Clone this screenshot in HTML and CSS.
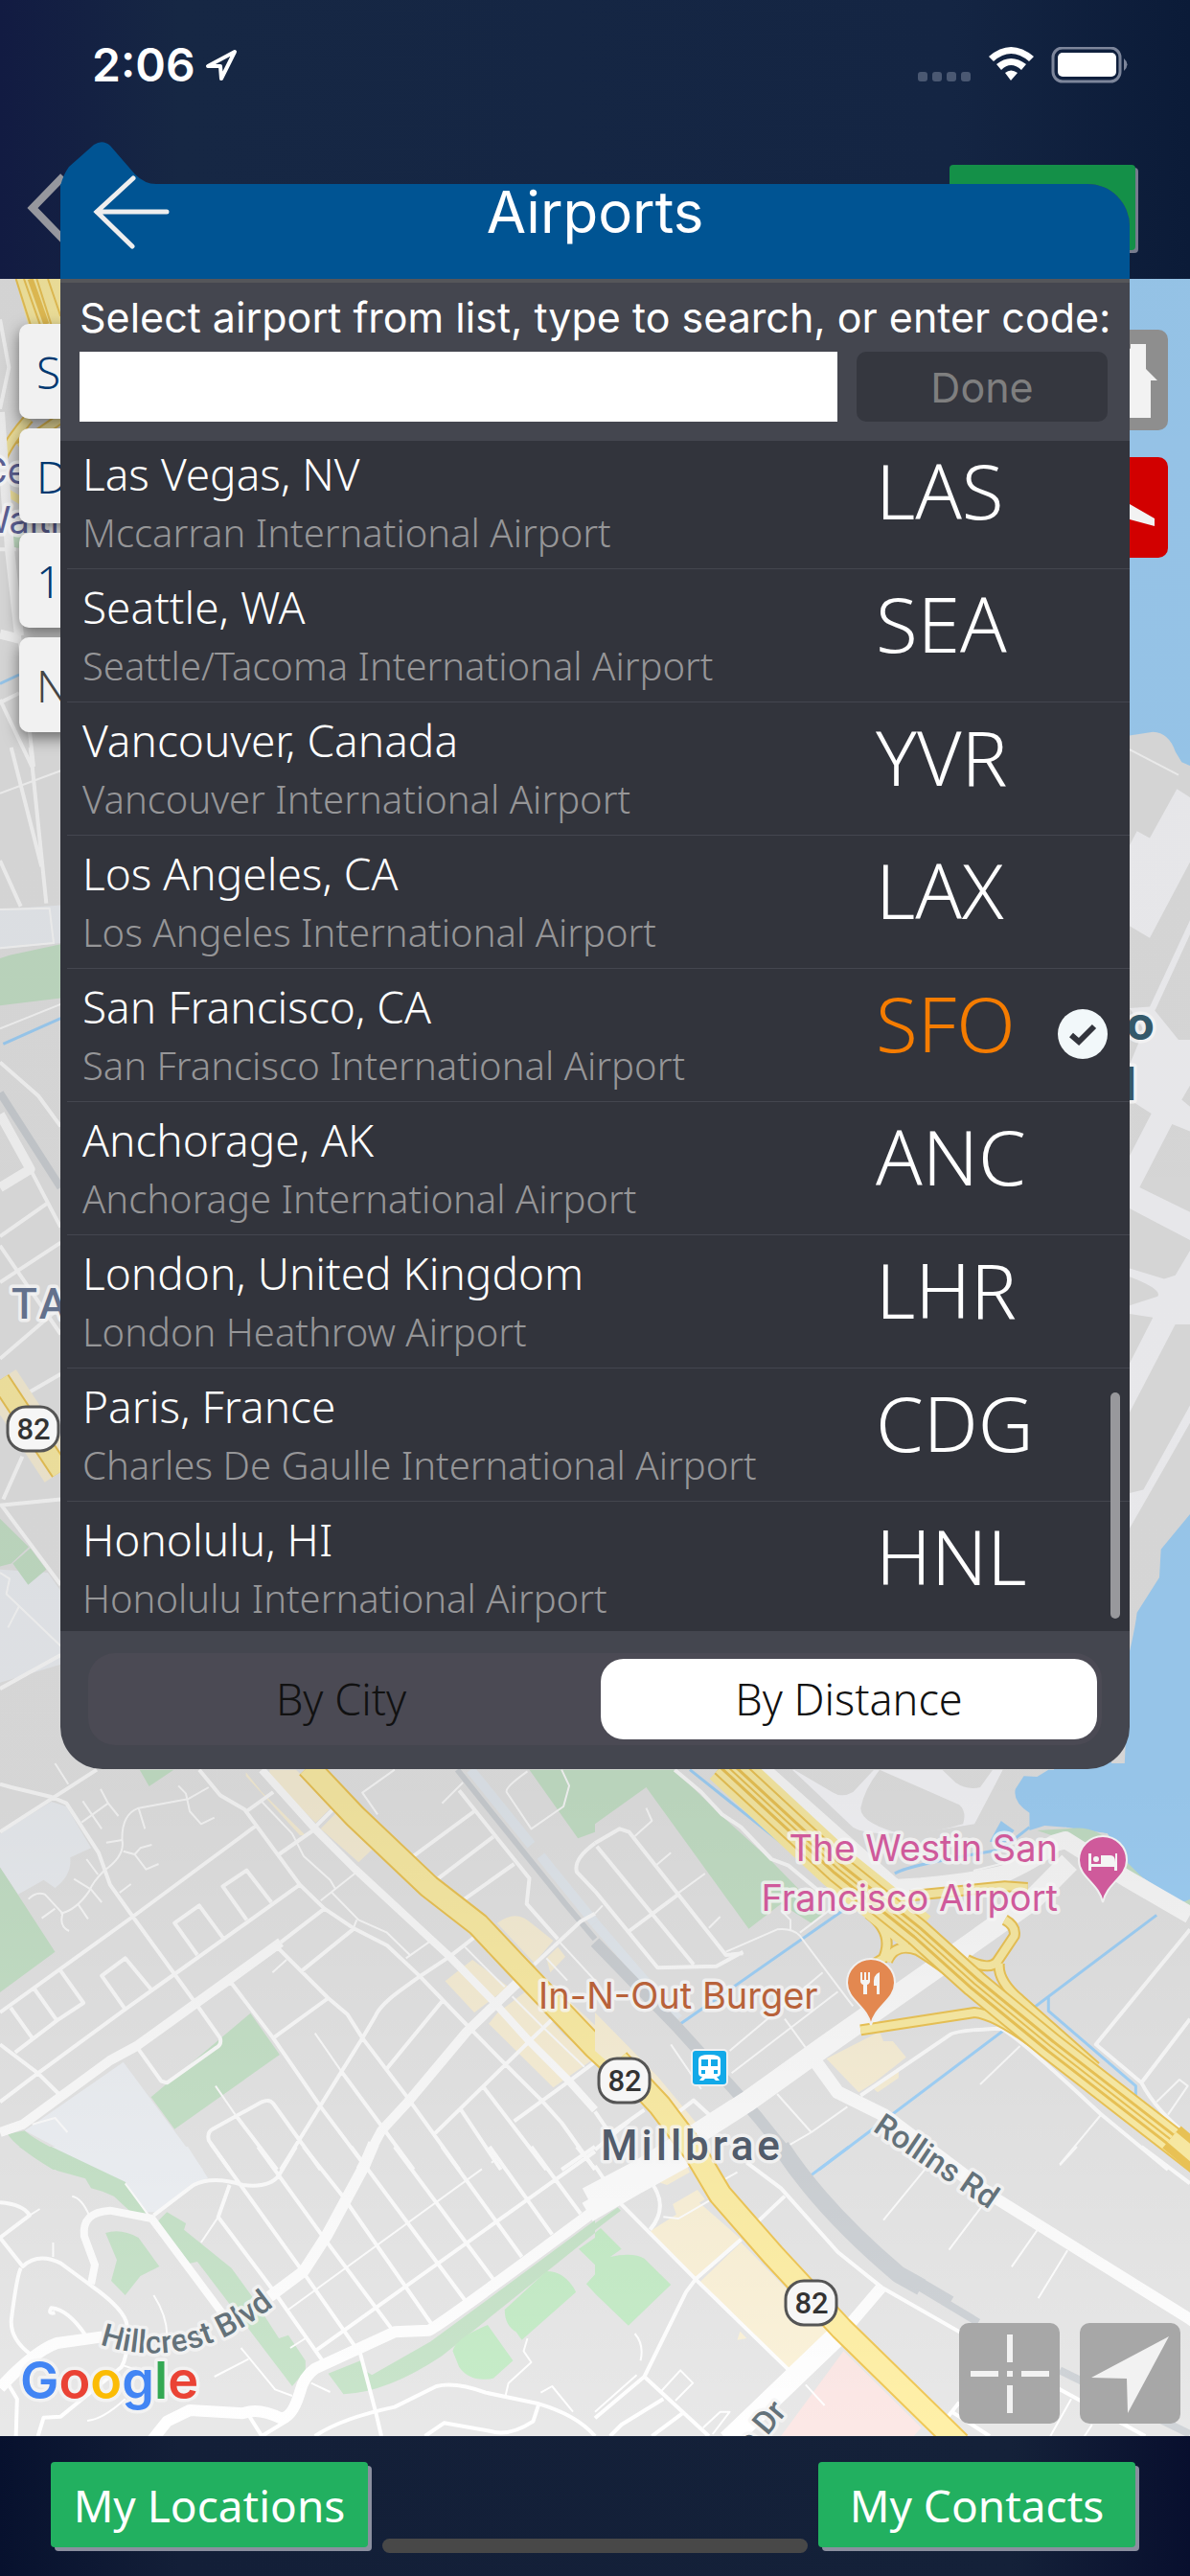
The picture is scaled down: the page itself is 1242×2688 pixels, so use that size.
FILE: index.html
```html
<!DOCTYPE html>
<html lang="en">
<head>
  <meta charset="UTF-8" />
  <meta name="viewport" content="width=device-width, initial-scale=1" />
  <title>Airports</title>
  <link rel="stylesheet" href="styles.css">
</head>
<body>
  <header class="top-bar">
    <div class="status">
      <span class="time">2:06</span>
      <svg class="loc" width="34" height="34" viewBox="0 0 34 34"><path d="M31 3 L3 18 L16 18 L17 31 Z" /></svg>
      <svg class="signal" width="221" height="38" viewBox="0 0 221 38">
        <g fill="#4a5872">
          <rect x="1" y="26" width="10" height="10" rx="3" /><rect x="16" y="26" width="10" height="10" rx="3" />
          <rect x="31" y="26" width="10" height="10" rx="3" /><rect x="46" y="26" width="10" height="10" rx="3" />
        </g>
        <g fill="#fff">
          <path d="M75 10 Q98 -10 122 10 L117 15 Q98 -1 80 15Z" />
          <path d="M83 18 Q98 6 114 18 L109 24 Q98 14 88 24Z" />
          <path d="M92 27 Q98 22 105 27 L98 35Z" />
          <rect x="147" y="6" width="61" height="25" rx="5" />
        </g>
        <rect x="142" y="1" width="70" height="35" rx="10" fill="none" stroke="#7d869b" stroke-width="3" />
        <path d="M216 12 Q223 18 216 25Z" fill="#7d869b" />
      </svg>
    </div>
    <div class="nav">
      <button class="nav-back" aria-label="Back">
        <svg width="44" height="72" viewBox="0 0 44 72"><path d="M38 3 L6 36 L38 69" /></svg>
      </button>
      <span class="nav-title">Pick Airport</span>
      <button class="green dim" aria-label="Next"></button>
    </div>
  </header>

  <main class="map">
    <svg class="map-art" viewBox="0 291 1242 2251" preserveAspectRatio="xMidYMid slice">
      <defs>
        <linearGradient id="shade" x1="0" y1="0" x2="0" y2="1">
          <stop offset="0" stop-opacity=".09" />
          <stop offset=".7" stop-opacity=".08" />
          <stop offset="1" stop-opacity="0" />
        </linearGradient>
        <path id="hillcrest" d="M104 2446 Q205 2480 300 2394" />
      </defs>
      <rect class="land" x="0" y="291" width="1242" height="2251" />

      <!-- west edge, top -->
      <g transform="translate(0 280) scale(.33333)">
        <path class="hwy-fill" d="M48 33 H190 V175 H88Z" />
        <path class="gold w2" d="M50 33 L95 175 M75 33 L125 175 M115 33 L160 175 M150 33 L190 150" />
        <path class="gold w6" d="M95 33 L145 175" />
        <path class="gold w12" d="M8 590 Q30 540 90 470 M60 560 L190 470" />
        <path class="hwy w8" d="M8 590 Q30 540 90 470 M60 560 L190 470 M20 700 L70 730" />
        <path class="park" d="M40 810 H120 V875 H40Z" />
        <path class="road w5" d="M0 160 L28 310 L0 440 M0 880 H50 M0 1360 L60 1330 M0 1350 L100 1560 M60 1150 L105 1560" />
        <path class="road w10" d="M0 450 L30 880 L60 1150 M0 1145 L60 1160" />
        <path class="creek" d="M0 1300 L60 1272" />
      </g>

      <!-- west edge, San Bruno side -->
      <g transform="translate(0 780) scale(.33333 .63776)">
        <path class="campus" d="M0 265 L190 258 V320 L0 330Z M0 1345 L150 1350 L190 1380 V1500 L0 1530Z" />
        <path class="park" d="M0 345 L30 340 L190 322 V410 L0 422Z M0 1262 L90 1308 L35 1335 L0 1340Z M40 1335 L95 1310 L145 1345 L88 1370Z" />
        <path class="rail w8" d="M0 565 L190 720" />
        <path class="road w2" d="M0 75 L190 38 M0 265 L155 263 L168 320 L0 328 M0 460 L190 420 M0 1350 L30 1360 L20 1385 L60 1405 L25 1440 M60 1405 L190 1470" />
        <path class="road w5" d="M95 0 L145 255 M35 0 L130 195 M0 185 L65 260 M0 515 L120 570 L190 620 M95 690 L190 785 M0 800 L150 745 M0 875 L190 810 M0 815 L190 960 M0 1000 L190 915 M75 1060 L190 1025 M0 1240 L190 1230 M5 1240 L190 1370 M70 1160 L10 1230 M0 1540 L190 1485" />
        <path class="road w10" d="M0 600 L95 690 L0 720" />
        <path class="creek" d="M10 485 L190 443" />
        <path class="shops-line" d="M0 1035 L190 1185" />
        <path class="gold w22" d="M0 1035 L190 1185" />
        <path class="hwy w18" d="M0 1035 L190 1185" />
      </g>

      <!-- bay and runways -->
      <rect class="water" x="1100" y="291" width="142" height="1600" />
      <g transform="translate(1060 700) scale(.33333 .73342)">
        <path class="land" d="M300 92 H357 L430 87 Q480 88 500 115 L520 130 L546 135 V1200 L455 1250 L450 1290 L380 1340 Q375 1360 357 1395 L340 1568 H300Z" />
        <path class="runway" d="M357 248 L380 228 L420 238 L505 168 L546 180 V272 L420 380 L357 363Z M357 560 L430 480 L510 525 L546 525 V590 L520 610 L546 620 V655 L490 645 L388 735 L546 770 V810 L357 765 V690 L425 630 L357 610Z M357 850 L465 865 L500 860 L546 825 V930 L500 930 L357 1055 V985 L430 920 L357 915 V903 L445 890 Q460 880 357 862Z M357 1170 L400 1165 L546 1045 V1070 L357 1220Z M357 480 L420 478 L546 355 V375 L440 480 L400 510Z" />
        <path class="road w2" d="M357 112 L510 148" />
      </g>

      <!-- hills, west of El Camino -->
      <g transform="translate(0 1840) scale(.39605 .33333)">
        <path class="park" d="M0 325 L145 590 L0 717Z M368 20 H458 L393 72Z M1395 20 H1568 V215 L1523 235Z M398 1045 L660 782 L700 850 L737 912 L460 1145Z M20 1160 L65 1150 Q100 1190 260 1272 H140 Q40 1200 20 1160Z" />
        <path class="campus" d="M0 220 L135 120 L175 135 L240 265 L185 295 Q190 350 145 390 L115 365 L48 410 L0 325Z M325 935 L535 1272 H260 L65 1150Z" />
        <path class="shops" d="M648 28 L690 90 L805 225 L790 225 L648 40Z M710 20 H780 L880 130 L832 187 L710 40Z M845 205 L890 150 L985 265 L945 310Z M1310 500 Q1360 455 1400 500 L1458 555 L1408 625Z M1173 682 L1245 615 L1340 700 L1250 780Z M1288 815 L1310 782 L1385 715 L1485 850 L1565 925 L1458 1015Z M1440 610 L1470 575 L1490 605 L1450 655Z M1460 700 L1568 820 V870Z" />
        <path class="rail-lite" d="M1240 20 L1400 255 M1425 290 L1568 500" />
        <path class="rail w6" d="M1205 20 L1320 190 L1490 440 L1568 550" />
        <path class="road w2" d="M145 0 L180 65 M550 75 L495 112 L365 140 Q320 160 322 240 Q330 290 275 335 Q245 370 235 400 Q200 460 160 470 M470 70 L490 95 L500 150 L530 190 L565 170 M265 80 L285 125 L312 165 M285 125 L215 185 M218 118 L268 205 M365 140 L382 205 M322 240 L280 248 M325 275 L355 285 L370 265 L400 255 M355 285 L385 332 L418 315 M228 300 L258 348 M195 362 L240 395 L268 435 M75 425 Q95 400 118 410 L165 470 Q155 510 182 525 M110 485 L145 455 M205 440 L232 487 M345 378 L315 405 M690 120 L770 220 L800 290 L870 365 L885 395 M935 345 L845 430 M875 405 L945 490 L1020 530 L1080 600 M1130 560 L1070 610 M940 490 L930 520 M755 615 L718 655 M830 845 L900 965 M568 1010 L620 1100 M1040 20 L955 92 L995 160 M1220 60 L1165 125 M1225 575 L1330 700 M1390 25 Q1330 75 1335 90 L1400 205 L1485 135 L1500 70 L1480 20 M1350 730 L1430 825 L1540 950 M85 1130 L145 1110 L178 1155 M1475 560 L1568 680 M1440 610 L1495 680" />
        <path class="road w5" d="M0 65 L30 75 L135 105 L175 125 L260 280 L290 380 L350 480 L460 660 L515 750 L580 860 Q585 880 570 890 L440 1000 L425 995 L365 895 M255 20 L0 215 M525 20 L580 100 L645 145 L790 380 L855 455 L930 515 L1020 570 L1105 665 L1235 825 L1330 940 L1427 1055 L1480 1125 L1568 1272 M720 90 L650 150 M675 195 L350 480 L0 780 M825 210 L735 285 M790 380 L460 660 L330 770 L100 970 L0 1060 M855 455 L740 560 M0 880 L100 970 L155 1035 M160 650 L220 750 L150 805 L40 905 M90 705 L150 805 M28 765 L85 860 M330 770 L268 665 L330 610 L400 710 M520 600 L460 500 L525 445 L590 550 M650 490 L587 385 L650 335 L715 435 M930 520 L795 650 M730 575 L865 735 L915 785 L955 860 L1070 1040 L1210 1272 M608 685 L720 860 L845 1075 L955 1250 M515 760 L608 685 L735 575 M865 735 L720 860 M1255 540 L1185 605 L1105 668 L1050 715 Q1000 760 990 790 L955 860 L900 965 L740 1272 M1165 745 L1020 955 M900 965 L1090 1272 M605 1272 L550 1180 Q545 1155 560 1145 L690 1060 Q710 1050 720 1065 L845 1272 M620 1100 L730 1272 M1500 995 L1355 1120 M1465 790 L1395 870 L1145 1160 M1275 1015 L1440 1272 M1215 1085 L1320 1272 M1568 935 L1500 995 M1568 1200 L1480 1272 M1090 290 L1250 150 M1150 365 L1300 230 M1218 430 L1355 315 M1210 85 L1395 360 L1388 440 L1470 550 M1568 250 Q1510 300 1520 340 L1568 400 M830 200 L885 135" />
        <path class="road w8" d="M690 20 L830 205 L935 330 L1185 605 L1300 745 L1395 870 L1500 995 L1568 1085" />
        <path class="road w10" d="M1370 680 L1230 840 L1075 1060 L1005 1150 L950 1272 M740 560 L360 885 L290 930 L60 1130 L0 1155" />
        <path class="gold w26" d="M812 10 L935 165 L1130 385 L1260 505 L1355 625 L1568 890 L1650 980" />
        <path class="hwy w22" d="M812 10 L935 165 L1130 385 L1260 505 L1355 625 L1568 890 L1650 980" />
        <path class="road w5" d="M1408 630 L1530 495 L1568 470" />
      </g>

      <!-- Bayshore and Millbrae Ave -->
      <g transform="translate(621 1840) scale(.39605 .33333)">
        <path class="runway" d="M520 20 H1075 L1000 190 L870 215 Q720 230 680 200Z" />
        <path class="land" d="M525 20 H735 L680 90 Q650 110 625 90Z M750 20 L960 130 Q980 150 970 190 Q900 215 820 225 Q700 190 700 140 Q710 80 750 20Z M915 20 H1048 L1015 75 Q980 85 950 60Z M1075 20 L1000 200 L1150 220 L1195 20Z" />
        <path class="water" d="M1195 20 H1360 V0 H1568 V430 L1545 435 Q1480 390 1410 330 L1350 220 L1240 200 L1185 195 L1145 210 V155 Q1100 120 1108 80 L1130 40 L1165 42Z M1070 180 L1105 210 L1080 250 L1040 245Z" />
        <path class="land" d="M1150 220 L1240 200 L1350 220 L1410 330 Q1480 390 1545 435 L1568 430 V800 H1100Z" />
        <path class="park" d="M0 20 H210 L330 160 L460 300 L600 470 L570 500 L490 440 L405 518 L135 75 L0 190Z M1165 210 L1240 205 Q1330 190 1360 260 L1470 390 L1400 350 L1280 270 L1240 240Z M1568 425 L1540 440 L1568 465Z" />
        <path class="shops" d="M610 925 L750 840 L760 870 L785 870 L820 920 L735 1000 L695 1030Z M735 1020 L800 960 V985 L745 1030Z M0 780 L165 980 L270 1130 L240 1150 L0 900Z" />
        <path class="creek" d="M250 20 L640 390 M660 455 L220 820 M1480 475 L590 1272 M1195 730 V775 L1425 1010 V1040 M790 345 Q820 320 1070 270 L1145 200" />
        <path class="rail-lite" d="M0 500 L160 720 L220 800" />
        <path class="road w2" d="M215 410 L290 345 M160 320 L200 280 M300 515 L330 480 M135 140 L150 180 L105 228 M345 590 L480 520 Q520 515 540 540 L670 745 L680 760 M490 460 L515 490 V520 M540 530 L640 440 M355 900 L600 655 M360 970 L640 715 M200 880 L280 1020 M500 800 L555 890 M480 1035 L570 1155 L490 1210 M570 1155 L665 1075 M1120 885 L1015 1005 M1335 1098 L1225 1255 M1480 1060 L1540 990 L1562 1010 L1510 1100 M995 370 L1000 335 L1120 300 M0 470 L20 445" />
        <path class="road w5" d="M210 20 L280 90 L335 160 L385 200 L465 300 L510 320 L590 400 M0 400 L165 640 L320 635 L390 590 M0 250 L65 205 L90 215 L345 600 L390 595 M5 260 L260 630 M90 525 L220 410 M1568 520 L1320 880 L1440 1000 Q1480 1090 1568 1170 M1568 800 L1440 1000 M700 1040 L935 850 Q950 835 1070 830 Q1120 860 1330 1095 L1510 1272 M205 1105 L260 1055 L310 1110 M0 1090 L40 1160 L130 1085 M0 1210 L90 1120" />
        <path class="rail w12" d="M0 560 L220 830 L380 1040 L430 1110 L540 1272" />
        <path class="road w18" d="M430 10 L790 390 L860 385 Q1000 370 1080 345 Q1180 290 1210 250 L1240 240 L1400 360 L1568 475" />
        <path class="road w22" d="M-20 1360 L120 1272 L400 1060 L600 890 L900 640 L1150 430 L1250 310" />
        <path class="road w14" d="M585 940 L640 1030 L760 1100 L1040 1350" />
        <path class="gold w12" d="M720 470 Q790 530 760 610 L720 640 M770 620 Q790 560 850 585 Q900 620 1020 730 M700 835 L1000 780 Q1050 785 1150 870 M980 615 Q1040 650 1060 620 L1105 540 Q1110 510 1080 490 M1065 625 Q1060 680 1120 740 L1320 950 M830 415 L1080 385 L1140 390" />
        <path class="hwy w8" d="M720 470 Q790 530 760 610 L720 640 M770 620 Q790 560 850 585 Q900 620 1020 730 M700 835 L1000 780 Q1050 785 1150 870 M980 615 Q1040 650 1060 620 L1105 540 Q1110 510 1080 490 M1065 625 Q1060 680 1120 740 L1320 950 M830 415 L1080 385 L1140 390" />
        <path class="hwy w40" d="M340 0 L640 330 L850 530" />
        <path class="gold w30" d="M340 0 L640 330 L850 530 L1000 690 L1200 885 L1650 1300" />
        <path class="hwy w26" d="M340 0 L640 330 L850 530 L1000 690 L1200 885 L1650 1300" />
        <path class="gold w14" d="M340 0 L640 330 L850 530 L1000 690 L1200 885 L1650 1300" />
        <path class="hwy w8" d="M340 0 L640 330 L850 530 L1000 690 L1200 885 L1650 1300" />
        <path class="gold w2" d="M340 0 L640 330 L850 530 L1000 690 L1200 885 L1650 1300" />
      </g>

      <!-- Hillcrest -->
      <g transform="translate(0 2240) scale(.39605 .33333)">
        <path class="campus" d="M135 0 H495 L548 98 L410 205 L385 205 L330 115Z" />
        <path class="park" d="M50 0 H135 L330 110 L385 210 L345 205 L300 155 L270 140 L240 130 L225 100 L150 75Z M415 235 L440 205 L490 240 L485 260 L610 380 L665 470 L735 600 L760 590 L805 670 V700 L770 750 L520 360 L500 365Z M278 270 Q320 255 365 285 L420 375 L370 405 L330 465 L293 420 L308 355Z M865 710 L950 670 L960 700 L980 715 L1135 610 L1568 230 V270 L1165 655 Q1020 770 905 775Z" />
        <path class="lawn" d="M1330 510 L1440 390 Q1490 390 1518 455 L1375 605 L1360 580 Q1330 560 1330 510Z M1193 640 Q1200 600 1285 558 L1352 670 L1300 725 Q1240 740 1210 690Z M1525 320 L1568 285 V370Z M1545 430 L1568 400 V460Z" />
        <path class="road w2" d="M190 155 Q215 160 235 215 M405 465 Q440 530 440 590 M635 630 L725 760 L770 780 M655 665 L565 720 M1390 600 L1380 640 L1400 675 L1340 740 L1332 780 M1425 770 L1455 750 L1510 830 M1270 70 L760 510 M575 220 L530 300 M330 115 L395 220 M78 215 L105 195 M140 300 V345 M325 685 L390 710 M230 858 Q270 855 330 790 M765 630 L805 600 M820 740 L870 768 M1295 50 L1310 35" />
        <path class="road w5" d="M405 215 L510 120 Q560 90 640 120 Q710 130 735 90 L780 0 M555 -10 L640 130 L800 395 L950 650 L990 830 L1005 906 M680 0 L850 280 L1035 575 M800 0 L900 150 L1140 560 M925 0 L1225 480 M1040 0 L1300 415 M1165 0 L1375 345 M1290 0 L1455 275 M1400 0 L1530 210 M1520 0 L1568 70 M1568 15 L830 640 M605 120 L575 220 L720 450 L850 670 M0 175 Q60 180 78 215 L0 285 L60 375 Q100 330 160 365 L240 435 Q330 510 335 560 Q340 650 320 690 L160 845 L115 848 L100 906 M55 380 Q45 400 30 540 Q25 600 80 650 M20 740 L45 790 L42 906 M225 590 Q180 510 135 505 Q125 525 145 520 M830 906 Q900 850 1040 815 L1150 750 Q1200 735 1280 770 L1420 805 Q1520 840 1568 906 M1420 805 L1405 860 Q1340 910 1290 890 L1170 865 L1120 906 M655 840 L690 906 L760 855" />
        <path class="road w8" d="M585 520 L400 225 L290 200 Q215 205 222 280 L250 370 L240 430" />
        <path class="road w12" d="M985 -10 L960 60 L860 280 L800 390 L710 470 M0 755 Q90 640 150 615 L270 595 M400 920 L440 860 L500 825 L640 835 Q680 815 740 850 Q770 850 790 770 Q800 720 830 695 L1040 580 L1130 575 Q1160 560 1590 180" />
      </g>

      <!-- south Millbrae -->
      <g transform="translate(621 2240) scale(.39605 .33333)">
        <path class="park" d="M0 240 L60 190 L68 200 L0 262Z" />
        <path class="lawn" d="M0 270 L15 255 L70 320 L40 345 Q100 330 130 350 L200 432 L88 560 L0 460Z" />
        <path class="shops" d="M145 265 L270 170 L385 290 L265 415Z M275 425 L385 300 L620 585 L525 710Z M165 110 L240 55 L250 80 L190 120Z M205 180 L270 135 L290 165 L215 215Z M375 605 L382 578 L400 600Z" />
        <path class="hospital" d="M490 906 L655 640 L860 880 L840 906Z" />
        <path class="road w2" d="M180 220 L220 225 L300 170 M175 765 L225 700 L258 740 L212 795 M870 70 L760 230 M1030 170 L933 323 M1165 262 L1098 376 M1245 325 L1168 475 M1270 0 L1225 58 M330 110 L375 80 M1310 870 L1290 906 M0 830 L110 715 M105 585 Q130 620 120 670 M555 745 L605 810 M285 880 L330 830 L355 830 L310 900 M1255 790 L1200 906 M330 100 L560 410 M660 560 L855 790" />
        <path class="creek" d="M670 0 L560 98" />
        <path class="rail w18" d="M490 0 Q600 200 800 400 L860 440" />
        <path class="rail w8" d="M840 410 L940 480 M800 400 L1010 550 M1225 700 L1568 900" />
        <path class="road w5" d="M0 60 L65 175 L265 415 L520 710 M85 0 L120 70 M265 415 L240 455 L130 720 L0 850 M265 415 L385 290 M150 115 Q195 190 145 260 M400 50 L490 130 L640 330 L755 440 L1225 760 L1450 906 M500 155 L415 250 M130 720 L300 906 M180 790 L70 870 L40 906 M230 835 L150 906 M1440 0 L1568 115 M960 800 L920 860 M940 830 L1040 906" />
        <path class="road w12" d="M755 440 L665 565 M880 20 L1040 150 L1568 540 L1600 565" />
        <path class="road w22" d="M-20 205 L110 115 L270 10 M635 595 L350 920" />
        <path class="gold w30" d="M1520 -30 L1640 90" />
        <path class="hwy w14" d="M1520 -30 L1640 90" />
        <path class="gold w26" d="M60 -270 L170 -130 L265 20 L330 150 L470 340 L650 570 L960 930" />
        <path class="hwy w22" d="M60 -270 L170 -130 L265 20 L330 150 L470 340 L650 570 L960 930" />
      </g>

      <rect x="0" y="291" width="1242" height="2251" fill="url(#shade)" />

      <!-- labels -->
      <g class="label">
        <text class="area" x="-20" y="505">Ce</text>
        <text class="area" x="-26" y="556">Waiti</text>
        <text class="town far" x="12" y="1376">TA</text>
        <text class="airport" x="1205" y="1085">o</text>
        <text class="airport" x="1186" y="1148">l</text>
        <text class="hotel" x="1104" y="1942">The Westin San</text>
        <text class="hotel" x="1104" y="1994">Francisco Airport</text>
        <text class="food" x="562" y="2096">In-N-Out Burger</text>
        <text class="town" x="627" y="2254">Millbrae</text>
        <text class="street" transform="translate(910 2223) rotate(34)">Rollins Rd</text>
        <text class="street"><textPath href="#hillcrest">Hillcrest Blvd</textPath></text>
        <text class="street" transform="translate(784 2562) rotate(-50)">e Dr</text>
        <text class="logo" x="21" y="2503"><tspan fill="#4285f4">G</tspan><tspan fill="#ea4335">o</tspan><tspan fill="#fbbc05">o</tspan><tspan fill="#4285f4">g</tspan><tspan fill="#34a853">l</tspan><tspan fill="#ea4335">e</tspan></text>
      </g>

      <!-- route shields -->
      <g class="shield">
        <rect x="8" y="1468" width="53" height="46" rx="19" /><text x="35" y="1502">82</text>
        <rect x="625" y="2148" width="53" height="46" rx="19" /><text x="652" y="2182">82</text>
        <rect x="820" y="2380" width="53" height="46" rx="19" /><text x="847" y="2414">82</text>
      </g>

      <!-- pins -->
      <g transform="translate(1151 1941)">
        <path class="pin" fill="#cf5a9b" d="M0 44 C-4 24 -25 18 -25 0 A25 25 0 0 1 25 0 C25 18 4 24 0 44Z" />
        <path fill="#f4f4f4" d="M-15 -7 H-12 V4 H-2 V-5 H8 Q13 -5 13 2 V-7 H15 V11 H12 V7 H-12 V11 H-15Z" />
        <circle fill="#f4f4f4" cx="-7" cy="-1" r="3" />
      </g>
      <g transform="translate(909 2069)">
        <path class="pin" fill="#e38850" d="M0 44 C-4 24 -25 18 -25 0 A25 25 0 0 1 25 0 C25 18 4 24 0 44Z" />
        <path fill="#f4f4f4" d="M-11 -11 H-9 V-3 H-7 V-11 H-5 V-3 H-3 V-11 H-1 V-2 Q-1 1 -4 2 V12 H-8 V2 Q-11 1 -11 -2Z M9 -11 V12 H6 V3 H3 Q2 -9 9 -11Z" />
      </g>
      <g transform="translate(722 2139)">
        <rect class="pin" width="37" height="37" rx="4" fill="#12a9e8" />
        <path fill="#fff" fill-rule="evenodd" d="M7 10 Q7 5 18 5 Q30 5 30 10 V24 Q30 28 26 28 L29 32 H25 L23 30 H14 L12 32 H8 L11 28 Q7 28 7 24Z M10 10 V17 H17 V10Z M20 10 V17 H27 V10Z M10 21 V25 H14 V21Z M23 21 V25 H27 V21Z" />
      </g>
    </svg>

    <div class="cards">
      <button class="card">S</button>
      <button class="card">D</button>
      <button class="card">1</button>
      <button class="card plain">N</button>
    </div>

    <div class="side">
      <button class="tool" aria-label="Home">
        <svg viewBox="0 0 105 105"><path d="M53 12 L66 20 V15 H82 V41 L94 53 H87 V92 H19 V53 H11Z" /></svg>
      </button>
      <button class="tool red" aria-label="Airport">
        <svg viewBox="0 0 105 105"><path d="M10 30 L24 30 L40 44 L65 49 L91 64 V72 L65 65 L20 60Z" /></svg>
      </button>
    </div>

    <div class="tools">
      <button class="tool pale" aria-label="Center map">
        <svg viewBox="0 0 105 105"><path d="M50 12 H56 V41 H50Z M50 65 H56 V94 H50Z M12 50 H41 V56 H12Z M65 50 H94 V56 H65Z M50 50 H56 V56 H50Z" /></svg>
      </button>
      <button class="tool pale" aria-label="My position">
        <svg viewBox="0 0 105 105"><path d="M93 14 L12 57 L49 58 L50 94Z" /></svg>
      </button>
    </div>
  </main>

  <footer class="bottom-bar">
    <button class="green">My Locations</button>
    <button class="green">My Contacts</button>
    <span class="home-line"></span>
  </footer>

  <section class="popup" aria-label="Airports">
    <svg class="tail" width="100" height="60" viewBox="0 0 100 60"><path d="M0 60 V46 Q3 34 9 26 L35 3 Q44 -3 52 4 L78 34 Q88 44 100 44 V60Z" /></svg>
    <div class="popup-head">
      <button class="back" aria-label="Back">
        <svg width="80" height="78" viewBox="0 0 80 78"><path d="M42 3 L4 38 L41 74 M4 38 H77" /></svg>
      </button>
      <h1>Airports</h1>
    </div>
    <form class="search">
      <label for="code">Select airport from list, type to search, or enter code:</label>
      <input type="text" id="code" />
      <button type="button" disabled>Done</button>
    </form>
    <div class="list">
      <ul>
        <li><div><h2>Las Vegas, NV</h2><p>Mccarran International Airport</p></div><span class="code">LAS</span></li>
        <li><div><h2>Seattle, WA</h2><p>Seattle/Tacoma International Airport</p></div><span class="code">SEA</span></li>
        <li><div><h2>Vancouver, Canada</h2><p>Vancouver International Airport</p></div><span class="code">YVR</span></li>
        <li><div><h2>Los Angeles, CA</h2><p>Los Angeles International Airport</p></div><span class="code">LAX</span></li>
        <li class="picked"><div><h2>San Francisco, CA</h2><p>San Francisco International Airport</p></div><span class="code">SFO</span>
          <svg class="check" width="54" height="54" viewBox="0 0 54 54"><circle cx="27" cy="27" r="26" /><path d="M15 28 L23 35 L39 19" /></svg>
        </li>
        <li><div><h2>Anchorage, AK</h2><p>Anchorage International Airport</p></div><span class="code">ANC</span></li>
        <li><div><h2>London, United Kingdom</h2><p>London Heathrow Airport</p></div><span class="code">LHR</span></li>
        <li><div><h2>Paris, France</h2><p>Charles De Gaulle International Airport</p></div><span class="code">CDG</span></li>
        <li><div><h2>Honolulu, HI</h2><p>Honolulu International Airport</p></div><span class="code">HNL</span></li>
      </ul>
      <span class="scroll"></span>
    </div>
    <div class="sort">
      <div class="segments">
        <input type="radio" name="sort" id="city" /><label for="city">By City</label>
        <input type="radio" name="sort" id="distance" checked /><label for="distance">By Distance</label>
      </div>
    </div>
  </section>
</body>
</html>
```

FILE: styles.css
```css
* {
  box-sizing: border-box;
}
body {
  margin: 0;
  min-height: 100vh;
  display: flex;
  flex-direction: column;
  position: relative;
  overflow-x: hidden;
  background: #14213d;
  font-family: "Noto Sans", "Open Sans", sans-serif;
  font-size: 46px;
}
h1, h2, p, ul {
  margin: 0;
  padding: 0;
  font-weight: 300;
}
button, input {
  font: inherit;
  border: none;
  padding: 0;
}
svg {
  display: block;
}

/* top bar */
.top-bar {
  background: linear-gradient(90deg, #121b42, #162744 15%, #142543 80%, #0b1b38);
}
.status {
  height: 136px;
  padding: 0 64px 0 96px;
  display: flex;
  align-items: center;
  color: #fff;
}
.time {
  font: 600 48px/60px Inter, sans-serif;
}
.loc {
  margin-left: 10px;
  fill: none;
  stroke: #fff;
  stroke-width: 4;
  stroke-linejoin: round;
}
.signal {
  margin-left: auto;
}
.nav {
  height: 155px;
  padding: 36px 57px 30px 28px;
  display: flex;
  align-items: center;
  justify-content: space-between;
}
.nav-back {
  background: none;
}
.nav-back path {
  fill: none;
  stroke: #96979e;
  stroke-width: 8;
}
.nav-title {
  font-size: 60px;
  line-height: 70px;
  color: #b4b8c0;
}
.green {
  min-width: 331px;
  height: 89px;
  border-radius: 4px;
  background: #22b060;
  box-shadow: 4px 4px 0 #8b8f9f;
  color: #fff;
}
.green.dim {
  min-width: 194px;
  background: #149048;
  box-shadow: 3px 3px 0 #777c8e;
}

/* map */
.map {
  flex: 1;
  position: relative;
  overflow: hidden;
}
.map-art {
  position: absolute;
  width: 100%;
  height: 100%;
}
.map-art path {
  vector-effect: non-scaling-stroke;
}
.land { fill: #e8e8e8; }
.water { fill: #a3d5fc; }
.park { fill: #c9e5cb; }
.lawn { fill: #c7edc9; }
.campus { fill: #f0f3f7; }
.runway { fill: #fcfcff; }
.shops { fill: #fcf3da; }
.hospital { fill: #fce8e6; }
.hwy-fill { fill: #fff0a5; }
.road, .gold, .hwy, .rail, .rail-lite, .creek, .shops-line {
  fill: none;
  stroke-linejoin: round;
}
.road { stroke: #fff; }
.gold { stroke: #f0c858; }
.hwy { stroke: #fff0a8; }
.rail { stroke: #d0d4d8; }
.rail-lite { stroke: #e7edf3; stroke-width: 10; }
.creek { stroke: #a3d5fc; stroke-width: 3; }
.shops-line { stroke: #fcf3da; stroke-width: 40; }
.w2 { stroke-width: 2; }
.w5 { stroke-width: 4; }
.w6 { stroke-width: 6; }
.w8 { stroke-width: 8; }
.w10 { stroke-width: 10; }
.w12 { stroke-width: 12; }
.w14 { stroke-width: 14; }
.w18 { stroke-width: 18; }
.w22 { stroke-width: 22; }
.w26 { stroke-width: 26; }
.w30 { stroke-width: 30; }
.w40 { stroke-width: 44; }

.label text {
  font-family: Inter, sans-serif;
  font-size: 38px;
  paint-order: stroke;
  stroke: rgba(245, 245, 245, 0.8);
  stroke-width: 7;
  stroke-linejoin: round;
}
.label .area { fill: #5b5f92; }
.label .town {
  font-family: Roboto, sans-serif;
  font-size: 44px;
  font-weight: 500;
  letter-spacing: 4px;
  fill: #525c6b;
}
.label .town.far { fill: #63718c; }
.label .airport {
  font-size: 48px;
  font-weight: 700;
  text-anchor: end;
  fill: #34596a;
}
.label .hotel { fill: #cf5a9b; text-anchor: end; }
.label .food { fill: #b8623a; }
.label .street {
  font-family: Roboto, sans-serif;
  font-size: 33px;
  font-weight: 500;
  fill: #64727a;
}
.label .logo {
  font-size: 54px;
  font-weight: 600;
}
.shield rect {
  fill: #f6f6f6;
  stroke: #555;
  stroke-width: 3;
}
.shield text {
  font: 500 31px Roboto, sans-serif;
  text-anchor: middle;
  fill: #333;
}
.pin {
  stroke: #f0f0f0;
  stroke-width: 2;
}

.cards {
  position: absolute;
  top: 47px;
  left: 20px;
  display: grid;
  gap: 10px;
}
.card {
  width: 400px;
  height: 99px;
  padding-left: 18px;
  border-radius: 10px;
  background: #f1f1f1;
  box-shadow: 0 6px 16px rgba(0, 0, 0, 0.5);
  color: #003870;
  font-weight: 300;
  text-align: left;
}
.card.plain {
  color: #444;
}
.side {
  position: absolute;
  top: 53px;
  right: 23px;
  display: grid;
  gap: 28px;
}
.tools {
  position: absolute;
  right: 10px;
  bottom: 13px;
  display: flex;
  gap: 21px;
}
.tool {
  width: 105px;
  height: 105px;
  border-radius: 10px;
  background: #8e8e8e;
}
.tool path {
  fill: #f2f2f2;
}
.tool.red {
  background: #d20000;
}
.tool.pale {
  background: #a7a7a7;
}

/* bottom bar */
.bottom-bar {
  position: relative;
  height: 146px;
  padding: 27px 57px 30px 53px;
  display: flex;
  justify-content: space-between;
  background: linear-gradient(90deg, #07112e, #131f38 15%, #142139 85%, #080f2e);
}
.home-line {
  position: absolute;
  left: 50%;
  bottom: 24px;
  width: 444px;
  height: 15px;
  margin-left: -222px;
  border-radius: 8px;
  background: #484848;
}

/* popup */
.popup {
  position: absolute;
  top: 192px;
  left: 63px;
  right: 63px;
  border-radius: 0 44px 44px 44px;
  background: #44464f;
  color: #fff;
}
.tail {
  position: absolute;
  top: -44px;
  left: 0;
  fill: #005493;
}
.popup-head {
  position: relative;
  height: 103px;
  border-bottom: 4px solid #55565a;
  border-radius: 0 44px 0 0;
  background: #005493;
  text-align: center;
}
.popup-head h1 {
  font: 400 60px/58px Inter, sans-serif;
}
.back {
  position: absolute;
  top: -9px;
  left: 34px;
  background: none;
}
.back path {
  fill: none;
  stroke: #eee;
  stroke-width: 5;
  stroke-linecap: round;
}
.search {
  height: 165px;
  padding: 8px 23px 20px 20px;
  display: grid;
  grid-template-columns: 1fr 262px;
  grid-template-rows: 64px 73px;
  column-gap: 20px;
  font-family: Inter, sans-serif;
}
.search label {
  grid-column: 1 / 3;
  font-size: 43px;
  line-height: 56px;
  white-space: nowrap;
}
.search input {
  min-width: 0;
  padding: 0 12px;
  background: #fff;
}
.search button {
  border-radius: 10px;
  background: #35373f;
  color: #7f7f7f;
  font-size: 43px;
}
.list {
  position: relative;
  height: 1242px;
  overflow: hidden;
  background: #32343c;
}
.list ul {
  margin-top: -5px;
  list-style: none;
}
.list li {
  position: relative;
  height: 139px;
  margin-left: 7px;
  padding-left: 16px;
  display: grid;
  grid-template-columns: 1fr 265px;
  border-bottom: 1px solid #44464f;
}
.list h2 {
  padding-top: 7px;
  font-size: 46px;
  line-height: 64px;
}
.list p {
  font-size: 40px;
  line-height: 60px;
  color: #969698;
}
.code {
  font-size: 80px;
  font-weight: 300;
  line-height: 112px;
}
.picked .code {
  color: #f57c00;
}
.check {
  position: absolute;
  top: 41px;
  right: 22px;
}
.check circle {
  fill: #f2f8fa;
}
.check path {
  fill: none;
  stroke: #32343c;
  stroke-width: 6;
}
.scroll {
  position: absolute;
  right: 10px;
  bottom: 13px;
  width: 10px;
  height: 236px;
  border-radius: 5px;
  background: #98989c;
}
.sort {
  padding: 23px 29px 25px;
}
.segments {
  display: grid;
  grid-template-columns: 1fr 1fr;
  column-gap: 12px;
  height: 96px;
  padding: 6px 5px;
  border-radius: 28px;
  background: #4b4a54;
}
.segments input {
  position: absolute;
  opacity: 0;
}
.segments label {
  border-radius: 24px;
  color: #111;
  font-size: 45px;
  font-weight: 300;
  line-height: 84px;
  text-align: center;
}
.segments input:checked + label {
  background: #fff;
}
```
